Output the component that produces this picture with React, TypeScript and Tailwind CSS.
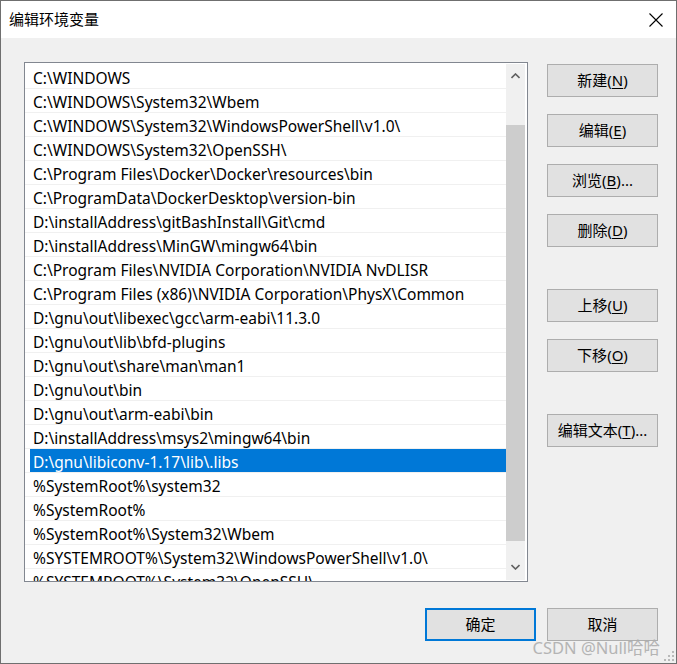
import React from "react";

const paths = [
  "C:\\WINDOWS",
  "C:\\WINDOWS\\System32\\Wbem",
  "C:\\WINDOWS\\System32\\WindowsPowerShell\\v1.0\\",
  "C:\\WINDOWS\\System32\\OpenSSH\\",
  "C:\\Program Files\\Docker\\Docker\\resources\\bin",
  "C:\\ProgramData\\DockerDesktop\\version-bin",
  "D:\\installAddress\\gitBashInstall\\Git\\cmd",
  "D:\\installAddress\\MinGW\\mingw64\\bin",
  "C:\\Program Files\\NVIDIA Corporation\\NVIDIA NvDLISR",
  "C:\\Program Files (x86)\\NVIDIA Corporation\\PhysX\\Common",
  "D:\\gnu\\out\\libexec\\gcc\\arm-eabi\\11.3.0",
  "D:\\gnu\\out\\lib\\bfd-plugins",
  "D:\\gnu\\out\\share\\man\\man1",
  "D:\\gnu\\out\\bin",
  "D:\\gnu\\out\\arm-eabi\\bin",
  "D:\\installAddress\\msys2\\mingw64\\bin",
  "D:\\gnu\\libiconv-1.17\\lib\\.libs",
  "%SystemRoot%\\system32",
  "%SystemRoot%",
  "%SystemRoot%\\System32\\Wbem",
  "%SYSTEMROOT%\\System32\\WindowsPowerShell\\v1.0\\",
  "%SYSTEMROOT%\\System32\\OpenSSH\\",
];

const font = { fontFamily: '"Noto Sans", "Noto Sans CJK SC", sans-serif' };

function Btn({
  label,
  mn,
  suffix = "",
  primary = false,
  className = "",
}: {
  label: string;
  mn: string;
  suffix?: string;
  primary?: boolean;
  className?: string;
}) {
  return (
    <div
      className={
        "w-[111px] h-[33px] flex items-center justify-center bg-[#e1e1e1] text-[15px] text-black leading-none " +
        (primary ? "border-2 border-[#0078d7] " : "border border-[#adadad] ") +
        className
      }
    >
      <span>
        {label}
        {mn ? (
          <>
            (<span className="underline underline-offset-2">{mn}</span>)
          </>
        ) : null}
        {suffix}
      </span>
    </div>
  );
}

function Grip() {
  const dots: [number, number][] = [
    [8, 0],
    [4, 4],
    [8, 4],
    [0, 8],
    [4, 8],
    [8, 8],
  ];
  return (
    <svg width="11" height="11" className="absolute right-[2px] bottom-[2px]">
      {dots.map(([x, y], i) => (
        <rect key={i} x={x + 1} y={y + 1} width="2" height="2" fill="#b9b9b9" />
      ))}
    </svg>
  );
}

export default function App() {
  return (
    <div
      className="w-[677px] h-[664px] border border-[#6f6f6f] flex flex-col bg-[#f0f0f0] overflow-hidden"
      style={font}
    >
      <div className="h-[37px] bg-white flex items-center justify-between pl-[8px] pr-[13px] shrink-0">
        <span className="text-[15px] text-black">编辑环境变量</span>
        <svg width="14" height="14" viewBox="0 0 14 14">
          <path d="M0.5 0.5 L13.5 13.5 M13.5 0.5 L0.5 13.5" stroke="#000" strokeWidth="1.1" />
        </svg>
      </div>
      <div className="relative flex-1 flex pl-[23px] pt-[24px]">
        <div className="w-[504px] h-[520px] border border-[#828790] bg-white flex overflow-hidden">
          <div className="flex-1 pt-[2px] overflow-hidden">
            {paths.map((p, i) => (
              <div key={i} className="h-[24px] border-b border-[#f0f0f0] flex">
                <div
                  className={
                    "flex-1 ml-[5px] h-[23px] flex items-center pl-[3px] pt-[4px] text-[15.5px] whitespace-nowrap " +
                    (i === 16 ? "bg-[#0078d7] text-white" : "text-black")
                  }
                >
                  {p}
                </div>
              </div>
            ))}
          </div>
          <div className="w-[19px] mr-[2px] my-[1px] bg-[#f0f0f0] flex flex-col items-center">
            <div className="h-[23px] flex items-center justify-center w-full">
              <svg width="9" height="6" viewBox="0 0 9 6">
                <path d="M0.5 5 L4.5 1 L8.5 5" fill="none" stroke="#606060" strokeWidth="1.6" />
              </svg>
            </div>
            <div className="w-full h-[38px]" />
            <div className="w-full h-[416px] bg-[#cdcdcd]" />
            <div className="flex-1" />
            <div className="h-[26px] flex items-center justify-center w-full">
              <svg width="9" height="6" viewBox="0 0 9 6">
                <path d="M0.5 1 L4.5 5 L8.5 1" fill="none" stroke="#606060" strokeWidth="1.6" />
              </svg>
            </div>
          </div>
        </div>
        <div className="ml-[19px] pt-[2px] flex flex-col">
          <Btn label="新建" mn="N" />
          <Btn label="编辑" mn="E" className="mt-[17px]" />
          <Btn label="浏览" mn="B" suffix="..." className="mt-[17px]" />
          <Btn label="删除" mn="D" className="mt-[17px]" />
          <Btn label="上移" mn="U" className="mt-[42px]" />
          <Btn label="下移" mn="O" className="mt-[17px]" />
          <Btn label="编辑文本" mn="T" suffix="..." className="mt-[42px]" />
        </div>
        <div className="absolute left-[424px] top-[570px] flex gap-[11px]">
          <Btn label="确定" mn="" primary />
          <Btn label="取消" mn="" />
        </div>
        <div className="absolute right-[16px] bottom-[7px] text-[16.5px] leading-none text-[#aeaeae] opacity-90">
          CSDN @Null哈哈
        </div>
        <Grip />
      </div>
    </div>
  );
}
